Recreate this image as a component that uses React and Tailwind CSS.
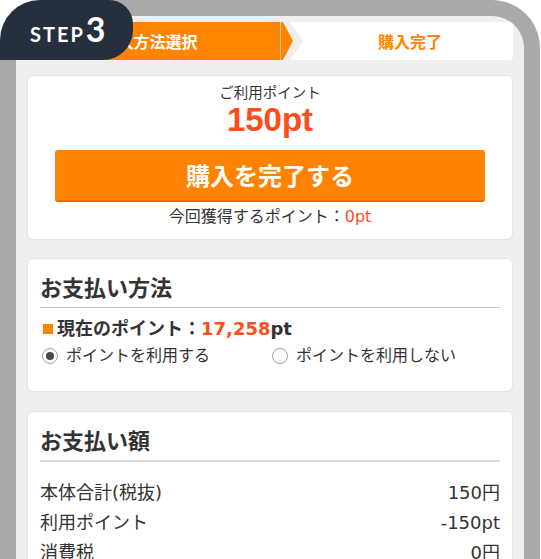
import React from "react";

function Radio({ checked, label }) {
  return (
    <div className="flex items-center">
      <span className="ml-[2px] w-[16px] h-[16px] rounded-full border border-[#a0a0a0] bg-white flex items-center justify-center shrink-0">
        {checked && <span className="w-[8px] h-[8px] rounded-full bg-[#4a4a4a]" />}
      </span>
      <span className="ml-[8px] text-[16px] leading-[22px] text-[#333]">{label}</span>
    </div>
  );
}

export default function App() {
  return (
    <div className="relative w-[541px] h-[559px] overflow-hidden bg-white font-['DejaVu_Sans','Noto_Sans_CJK_JP',sans-serif] text-[#333]">
      <div className="w-[540px] h-[640px] border-[16px] border-b-0 border-[#a9a9a9] rounded-t-[48px] bg-[#efefef] px-[11px] pt-[6px]">
        {/* step bar */}
        <div className="flex h-[38px]">
          <div className="w-[253px] bg-[#ff8400] flex items-center justify-center pr-[8px] text-white font-bold text-[16px] font-['Noto_Sans_CJK_JP',sans-serif]">
            購入方法選択
          </div>
          <svg width="23" height="38" viewBox="0 0 23 38" className="shrink-0 block">
            <line x1="0.5" y1="0" x2="0.5" y2="38" stroke="#ffc58a" strokeWidth="1" />
            <polygon points="1,0 3,0 13,19 3,38 1,38" fill="#ff8400" />
            <polygon points="10,0 23,0 23,38 10,38 23,19" fill="#ffffff" />
          </svg>
          <div className="flex-1 bg-white rounded-r-[4px] flex items-center justify-center pl-[4px] text-[#ff8400] font-bold text-[16px] font-['Noto_Sans_CJK_JP',sans-serif]">
            購入完了
          </div>
        </div>

        {/* card 1 */}
        <div className="mt-[15px] bg-white border border-[#e3e3e3] rounded-[6px] px-[12px] pt-[8px] pb-[12px] text-center">
          <div className="text-[14.5px] leading-[18px]">ご利用ポイント</div>
          <div className="text-[33px] leading-[36px] font-bold text-[#ff4c1c] font-['Liberation_Sans',sans-serif]">150pt</div>
          <div className="mx-[15px] mt-[12px] h-[52px] bg-[#ff8300] border-b-2 border-[#f56a00] rounded-[3px] flex items-center justify-center text-white font-bold text-[24px] font-['Noto_Sans_CJK_JP',sans-serif]">
            購入を完了する
          </div>
          <div className="mt-[5px] text-[16px] leading-[20px]">
            今回獲得するポイント：<span className="text-[#ff4c1c]">0pt</span>
          </div>
        </div>

        {/* card 2 */}
        <div className="mt-[18px] bg-white border border-[#e3e3e3] rounded-[6px] px-[12px] pt-[16px] pb-[24px]">
          <div className="text-[22px] leading-[28px] font-bold">お支払い方法</div>
          <div className="mt-[4px] h-px bg-[#c8c8c8]" />
          <div className="mt-[9px] flex items-center text-[18px] leading-[24px] font-bold">
            <span className="ml-[3px] mr-[4px] w-[10px] h-[10px] bg-[#ff8400] inline-block" />
            <span>現在のポイント：</span>
            <span className="text-[#ff4c1c]">17,258</span>
            <span>pt</span>
          </div>
          <div className="mt-[4px] grid grid-cols-2">
            <Radio checked label="ポイントを利用する" />
            <Radio label="ポイントを利用しない" />
          </div>
        </div>

        {/* card 3 */}
        <div className="mt-[19px] bg-white border border-[#e3e3e3] rounded-[6px] px-[12px] pt-[16px] pb-[20px]">
          <div className="text-[22px] leading-[28px] font-bold">お支払い額</div>
          <div className="mt-[4px] h-[2px] bg-[#dcdcdc]" />
          <div className="mt-[15px] text-[18px]">
            <div className="flex justify-between h-[30px] items-center">
              <span>本体合計(税抜)</span>
              <span>150円</span>
            </div>
            <div className="flex justify-between h-[30px] items-center">
              <span>利用ポイント</span>
              <span>-150pt</span>
            </div>
            <div className="flex justify-between h-[30px] items-center">
              <span>消費税</span>
              <span>0円</span>
            </div>
          </div>
        </div>
      </div>

      {/* STEP badge */}
      <div className="absolute left-0 top-0 w-[133px] h-[60px] bg-[#252f3d] rounded-tl-[40px] rounded-tr-[24px] rounded-br-[30px] flex items-baseline pl-[30px] pt-[12px] text-white font-['Lato',sans-serif] font-bold">
        <span className="text-[20px] leading-none tracking-[2px]">STEP</span>
        <span className="text-[34px] leading-none ml-[1px]">3</span>
      </div>
    </div>
  );
}
